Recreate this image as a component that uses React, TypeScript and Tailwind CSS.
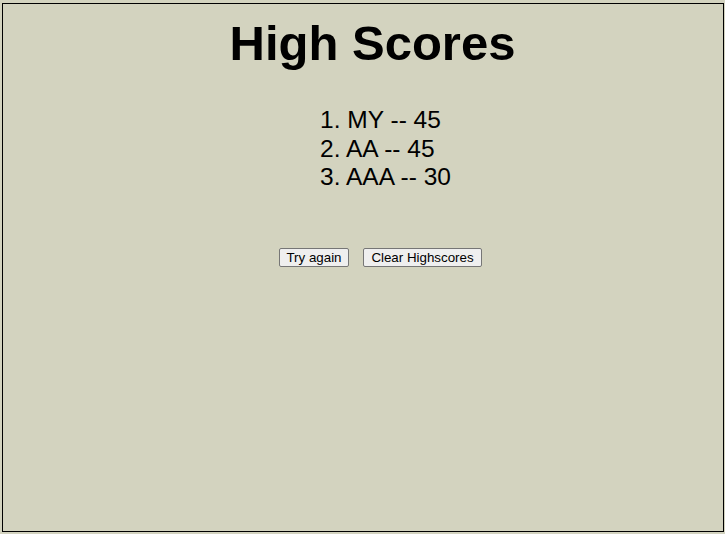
export default function App() {
  const scores = [
    { name: "MY", score: 45 },
    { name: "AA", score: 45 },
    { name: "AAA", score: 30 },
  ];

  return (
    <div className="h-[534px] w-[725px] overflow-hidden bg-[#d3d3bf] pt-[3px] pl-[2px] font-['Arial','Liberation_Sans',sans-serif] text-black">
      <div className="h-[529px] w-[722px] border border-black">
        {/* Title */}
        <h1 className="mt-[12px] pl-[19px] text-center text-[49px] font-bold leading-[55px]">
          High Scores
        </h1>

        {/* Score list */}
        <div className="mt-[35px] flex justify-center pl-[45px]">
          <ol className="text-[24.5px] leading-[28.5px]">
            {scores.map((s, i) => (
              <li key={i}>
                {i + 1}. {s.name} -- {s.score}
              </li>
            ))}
          </ol>
        </div>

        {/* Actions */}
        <div className="mt-[56px] flex justify-center gap-[14px] pl-[35px]">
          <button className="h-[19px] w-[70px] rounded-[2px] border border-[#767676] bg-[#efefef] text-[13.33px] leading-[15px]">
            Try again
          </button>
          <button className="h-[19px] w-[119px] rounded-[2px] border border-[#767676] bg-[#efefef] text-[13.33px] leading-[15px]">
            Clear Highscores
          </button>
        </div>
      </div>
    </div>
  );
}
